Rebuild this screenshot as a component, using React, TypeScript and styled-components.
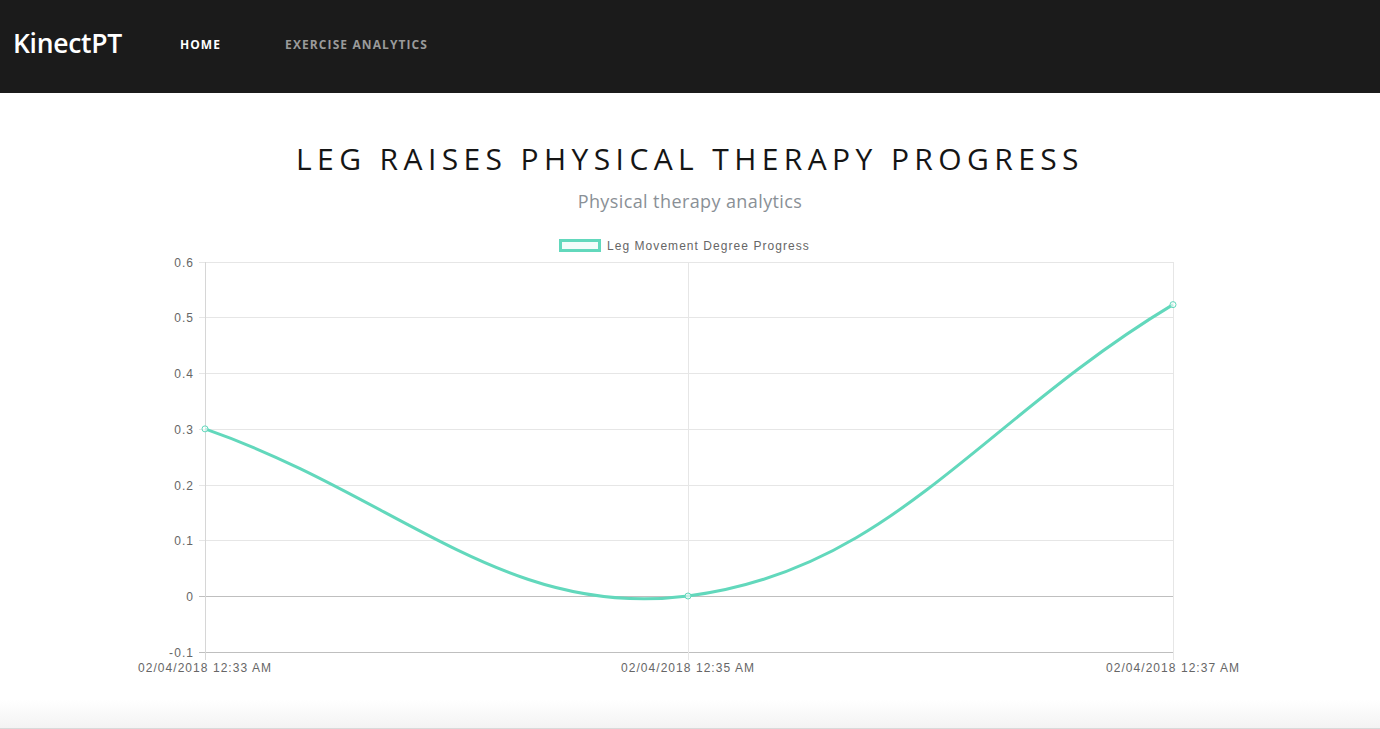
import React from "react";
import styled, { createGlobalStyle } from "styled-components";

const GlobalStyle = createGlobalStyle`
  html, body { margin: 0; padding: 0; background: #fff; }
  body { font-family: "Open Sans", "Liberation Sans", sans-serif; }
`;

const Page = styled.div`
  width: 1380px;
  height: 729px;
  display: flex;
  flex-direction: column;
  overflow: hidden;
`;

const NavBar = styled.nav`
  height: 93px;
  background: #1b1b1b;
  display: flex;
  align-items: center;
  padding: 0 13px;
  box-sizing: border-box;
  flex-shrink: 0;
`;

const Brand = styled.a`
  font-family: "Open Sans", sans-serif;
  font-size: 26.5px;
  font-weight: 600;
  color: #fff;
  letter-spacing: -0.3px;
  margin-right: 58px;
  margin-top: -7px;
`;

const NavLinks = styled.ul`
  list-style: none;
  display: flex;
  gap: 64px;
  margin: 0;
  padding: 0;
`;

const NavLink = styled.li<{ $active?: boolean }>`
  font-family: "Open Sans", sans-serif;
  font-size: 12px;
  font-weight: 700;
  letter-spacing: 1.1px;
  color: ${(p) => (p.$active ? "#ffffff" : "#9a9a9a")};
  margin-top: -4px;
`;

const Main = styled.main`
  flex: 1;
  display: flex;
  flex-direction: column;
  align-items: center;
  padding-top: 46px;
`;

const Title = styled.h1`
  margin: 0;
  font-family: "Open Sans", sans-serif;
  font-weight: 400;
  font-size: 30px;
  line-height: 40px;
  letter-spacing: 5.4px;
  color: #151515;
`;

const Subtitle = styled.p`
  margin: 10px 0 0;
  font-family: "Open Sans", sans-serif;
  font-size: 18px;
  line-height: 24px;
  letter-spacing: 0.4px;
  color: #8a9096;
`;

const ChartSvg = styled.svg`
  display: block;
  margin-top: 17px;
  flex-shrink: 0;
`;

const Footer = styled.footer`
  height: 28px;
  background: linear-gradient(#ffffff, #f3f3f3);
  border-bottom: 1px solid #d9d9d9;
  flex-shrink: 0;
`;

const LINE = "#62d8bc";
const X0 = 205;
const X1 = 688;
const X2 = 1173;
const yOf = (v: number) => 596 - v * 557.1;
const yTicks = [0.6, 0.5, 0.4, 0.3, 0.2, 0.1, 0, -0.1];
const xTicks = [
  { x: X0, label: "02/04/2018 12:33 AM" },
  { x: X1, label: "02/04/2018 12:35 AM" },
  { x: X2, label: "02/04/2018 12:37 AM" },
];

const tickFont = {
  fontFamily: "'Liberation Sans', Arial, sans-serif",
  fontSize: 12,
  letterSpacing: 1.05,
  fill: "#666",
};

function Chart() {
  const p0 = { x: X0, y: yOf(0.3) };
  const p1 = { x: X1, y: yOf(0) };
  const p2 = { x: X2, y: yOf(0.523) };
  const path = `M${p0.x},${p0.y} C398.2,${p0.y + 67.2} 504.2,619.4 ${p1.x},${p1.y} C891.4,570.2 979,${p2.y + 116.4} ${p2.x},${p2.y}`;
  return (
    <ChartSvg width={1380} height={453} viewBox="0 230 1380 453">
      <rect x={560.5} y={240.5} width={39} height={10} fill="rgba(98,216,188,0.08)" stroke={LINE} strokeWidth={3} />
      <text x={607} y={249.5} {...tickFont}>Leg Movement Degree Progress</text>
      {yTicks.map((v) => {
        const y = Math.round(yOf(v)) + 0.5;
        const strong = v === 0 || v === -0.1;
        return (
          <g key={v}>
            <line x1={199} x2={X2} y1={y} y2={y} stroke={strong ? "#bfbfbf" : "#e6e6e6"} strokeWidth={1} />
            <text x={194} y={y + 4} textAnchor="end" {...tickFont}>{v === 0 ? "0" : String(v)}</text>
          </g>
        );
      })}
      {xTicks.map((t, i) => (
        <g key={t.label}>
          <line x1={t.x + 0.5} x2={t.x + 0.5} y1={262} y2={660} stroke={i === 0 ? "#d6d6d6" : "#e6e6e6"} strokeWidth={1} />
          <text x={t.x} y={672} textAnchor="middle" {...tickFont}>{t.label}</text>
        </g>
      ))}
      <path d={path} fill="none" stroke={LINE} strokeWidth={3} />
      {[p0, p1, p2].map((p, i) => (
        <circle key={i} cx={p.x} cy={p.y} r={3} fill="rgba(255,255,255,0.6)" stroke={LINE} strokeWidth={1} />
      ))}
    </ChartSvg>
  );
}

export default function App() {
  return (
    <>
      <GlobalStyle />
      <Page>
        <NavBar>
          <Brand>KinectPT</Brand>
          <NavLinks>
            <NavLink $active>HOME</NavLink>
            <NavLink>EXERCISE ANALYTICS</NavLink>
          </NavLinks>
        </NavBar>
        <Main>
          <Title>LEG RAISES PHYSICAL THERAPY PROGRESS</Title>
          <Subtitle>Physical therapy analytics</Subtitle>
          <Chart />
        </Main>
        <Footer />
      </Page>
    </>
  );
}
